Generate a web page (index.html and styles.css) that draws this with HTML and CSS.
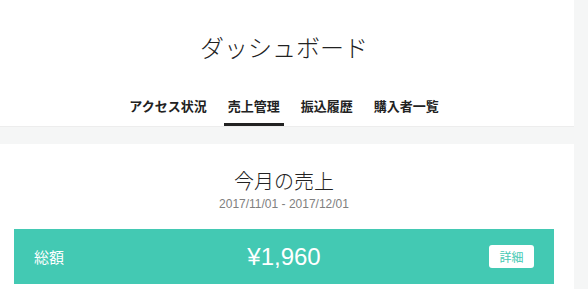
FILE: index.html
```html
<!DOCTYPE html>
<html lang="ja">

<head>
    <meta charset="UTF-8">
    <meta name="viewport" content="width=device-width, initial-scale=1.0">
    <title>ダッシュボード</title>
    <link rel="stylesheet" href="styles.css">
</head>

<body>
    <div class="page">
        <header class="header">
            <h1 class="page-title">ダッシュボード</h1>
            <nav class="tabs">
                <a class="tab" href="#">アクセス状況</a>
                <a class="tab active" href="#">売上管理</a>
                <a class="tab" href="#">振込履歴</a>
                <a class="tab" href="#">購入者一覧</a>
            </nav>
        </header>

        <section class="card">
            <h2 class="card-title">今月の売上</h2>
            <p class="period">2017/11/01 - 2017/12/01</p>

            <div class="total-bar">
                <span class="total-label">総額</span>
                <span class="total-amount">¥1,960</span>
                <button class="detail-btn" type="button">詳細</button>
            </div>
        </section>
    </div>
</body>

</html>
```

FILE: styles.css
```css
body {
    margin: 0;
    padding: 0;
    background-color: #f5f6f6;
    font-family: "Liberation Sans", "Noto Sans CJK JP", sans-serif;
    color: #222;
}

.page {
    width: 574px;
}

.header {
    background-color: #fff;
    border-bottom: 1px solid #ededed;
    padding: 32px 20px 0 14px;
    text-align: center;
}

.page-title {
    margin: 0;
    font-family: "Noto Sans CJK JP", sans-serif;
    font-size: 24px;
    font-weight: 300;
    line-height: 29px;
    color: #222;
}

.tabs {
    display: flex;
    justify-content: center;
    gap: 13px;
    margin-top: 35px;
}

.tab {
    display: block;
    padding: 0 4px 7px;
    border-bottom: 3px solid transparent;
    font-family: "Noto Sans CJK JP", sans-serif;
    font-size: 13px;
    font-weight: bold;
    line-height: 20px;
    color: #222;
    text-decoration: none;
}

.tab.active {
    border-bottom-color: #222;
}

.card {
    background-color: #fff;
    margin-top: 17px;
    padding: 25px 20px 20px 14px;
    text-align: center;
}

.card-title {
    margin: 0;
    font-family: "Noto Sans CJK JP", sans-serif;
    font-size: 20px;
    font-weight: 300;
    line-height: 24px;
    color: #222;
}

.period {
    margin: 3px 0 17px;
    font-size: 12px;
    line-height: 16px;
    color: #808080;
}

.total-bar {
    display: flex;
    align-items: center;
    justify-content: space-between;
    height: 55px;
    padding: 0 20px 0 20px;
    background-color: #43c9b3;
    color: #fff;
}

.total-label {
    width: 60px;
    text-align: left;
    font-family: "Noto Sans CJK JP", sans-serif;
    font-size: 15px;
}

.total-amount {
    font-size: 24px;
}

.detail-btn {
    width: 45px;
    height: 23px;
    padding: 0;
    border: none;
    border-radius: 3px;
    background-color: #fff;
    color: #43c9b3;
    font-family: "Noto Sans CJK JP", sans-serif;
    font-size: 12px;
    cursor: pointer;
    margin-left: 15px;
}
```
